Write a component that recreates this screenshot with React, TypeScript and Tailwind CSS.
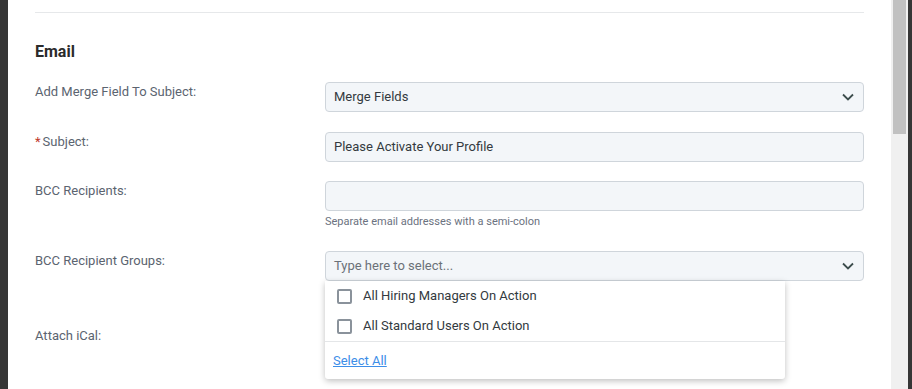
import React from "react";

const Chevron = () => (
  <svg width="14" height="14" viewBox="0 0 14 14" fill="none" className="text-[#3d4d4d]">
    <path d="M2 4.5L7 9.5L12 4.5" stroke="currentColor" strokeWidth="1.8" />
  </svg>
);

const Label = ({ children, required }: { children: React.ReactNode; required?: boolean }) => (
  <div className="w-[290px] shrink-0 pt-[1px] text-[13px] leading-[18px] text-[#5b6470]">
    {required && <span className="text-[#c0392b] mr-[2px]">*</span>}
    {children}
  </div>
);

const Field = ({ children }: { children: React.ReactNode }) => (
  <div className="h-[30px] w-full rounded-[4px] border border-[#cfd5db] bg-[#f3f6f9] px-[8px] flex items-center justify-between text-[13px] text-[#333a40]">
    {children}
  </div>
);

const Check = ({ text }: { text: string }) => (
  <div className="h-[30px] flex items-center pl-[12px] gap-[11px] text-[13px] text-[#333a40]">
    <span className="w-[15px] h-[15px] rounded-[2px] border-2 border-[#8a929b] bg-white" />
    {text}
  </div>
);

export default function App() {
  return (
    <div className="w-[912px] h-[389px] flex overflow-hidden" style={{ fontFamily: "Roboto, 'Noto Sans', sans-serif" }}>
      <div className="w-2 bg-[#363636]" />
      <div className="flex-1 bg-white px-[27px] overflow-hidden">
        <div className="mt-[12px] border-t border-[#e6e8ea]" />
        <h2 className="mt-[27px] text-[16px] leading-[24px] font-bold text-[#2b2b2b]">Email</h2>

        <div className="mt-[18px] flex items-start">
          <Label>Add Merge Field To Subject:</Label>
          <Field>
            <span>Merge Fields</span>
            <Chevron />
          </Field>
        </div>

        <div className="mt-[20px] flex items-start">
          <Label required>Subject:</Label>
          <Field>
            <span>Please Activate Your Profile</span>
          </Field>
        </div>

        <div className="mt-[19px] flex items-start">
          <Label>BCC Recipients:</Label>
          <div className="w-full">
            <Field>
              <span />
            </Field>
            <p className="mt-[3px] text-[11px] leading-[16px] text-[#6b7280]">
              Separate email addresses with a semi-colon
            </p>
          </div>
        </div>

        <div className="mt-[21px] flex items-start">
          <Label>BCC Recipient Groups:</Label>
          <div className="w-full relative">
            <Field>
              <span className="text-[#6b7178]">Type here to select...</span>
              <Chevron />
            </Field>
            <div className="absolute left-0 top-[30px] w-[460px] bg-white rounded-b-[3px] shadow-[0_2px_6px_rgba(0,0,0,0.25)] z-10">
              <Check text="All Hiring Managers On Action" />
              <Check text="All Standard Users On Action" />
              <div className="border-t border-[#e4e6e8] h-[38px] flex items-center px-[8px]">
                <a className="text-[13px] text-[#3d8ee8] underline cursor-pointer">Select All</a>
              </div>
            </div>
          </div>
        </div>

        <div className="mt-[45px] flex items-start">
          <Label>Attach iCal:</Label>
        </div>
      </div>
      <div className="w-[17px] bg-[#f0f0f0] pl-[2px] pr-[2px]">
        <div className="h-[134px] bg-[#c1c1c1]" />
      </div>
      <div className="w-1 bg-[#363636]" />
    </div>
  );
}
